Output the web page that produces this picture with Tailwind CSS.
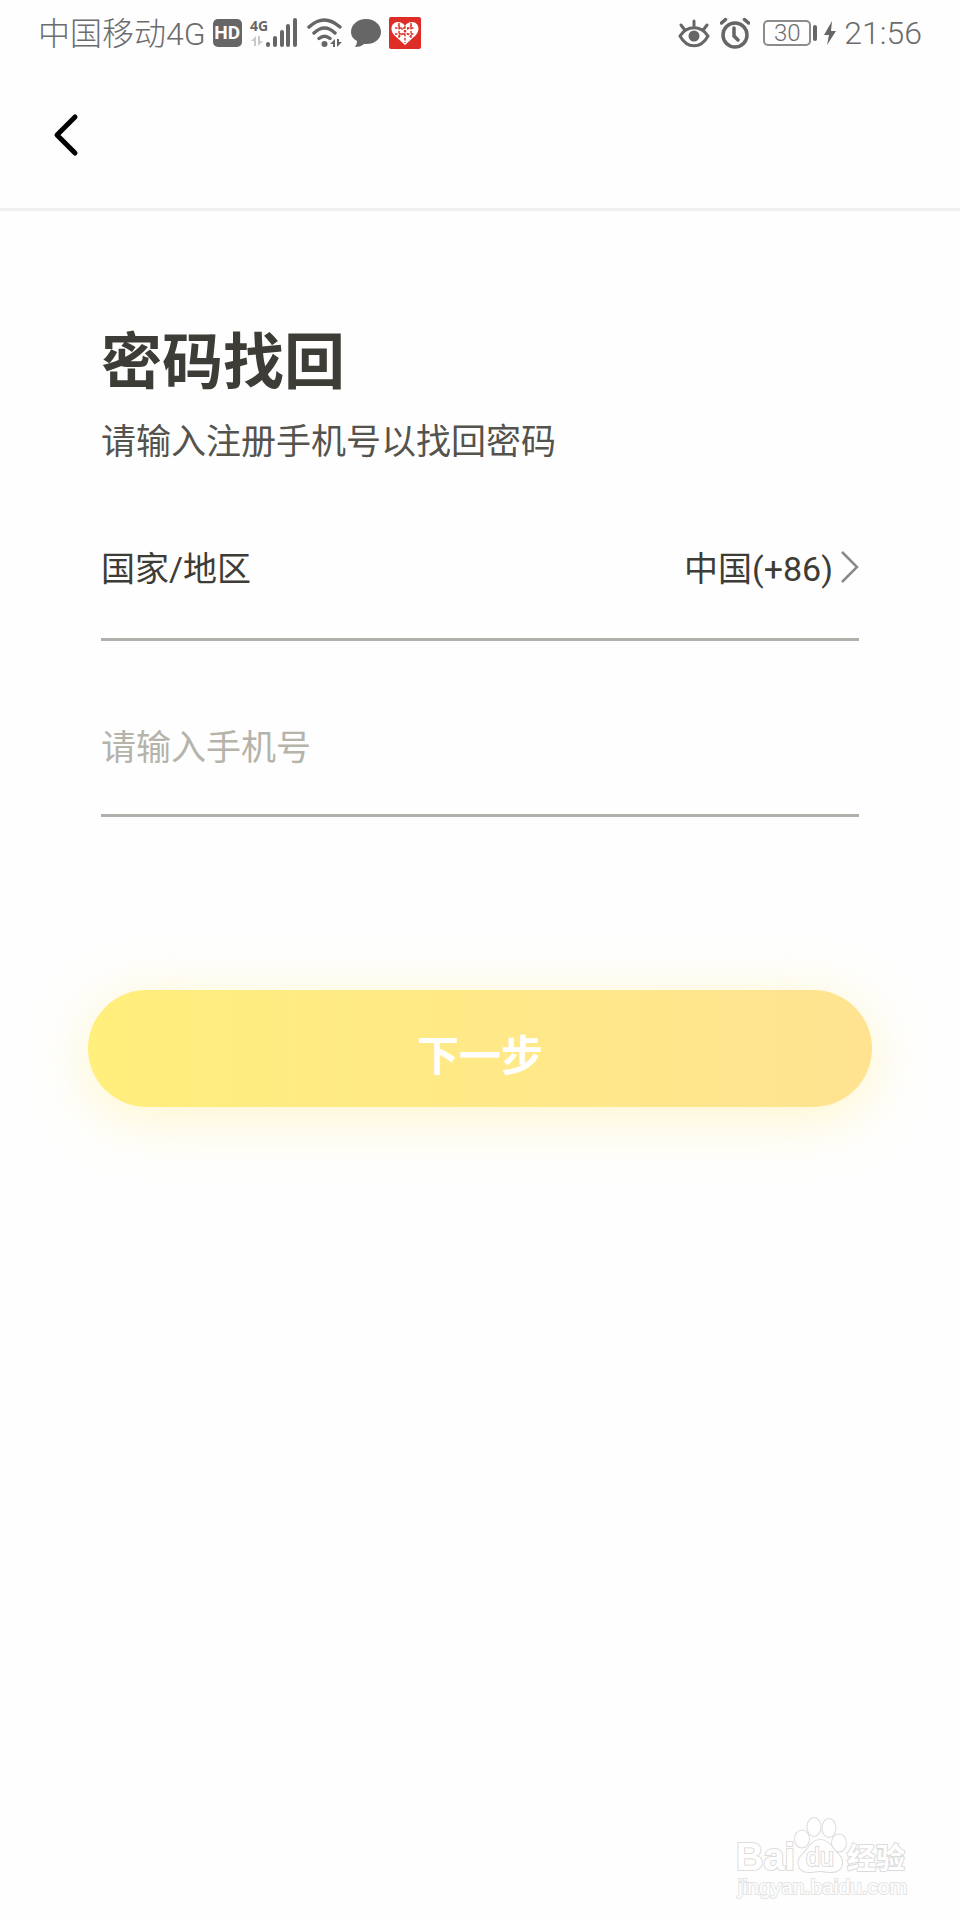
<!DOCTYPE html>
<html lang="zh-CN">

<head>
    <meta charset="UTF-8">
    <meta name="viewport" content="width=device-width, initial-scale=1.0">
    <title>密码找回</title>
    <script src="https://cdn.jsdelivr.net/npm/@tailwindcss/browser@4"></script>
</head>

<body class="bg-[#fefefe] font-['Roboto','Noto_Sans_CJK_SC',sans-serif] text-[#3d3c36]">
    <div class="flex min-h-screen flex-col">

        <!-- Status bar -->
        <div class="flex h-[66px] items-center justify-between px-[38px] text-[#6c6c6c]">
            <div class="flex items-center gap-[7px]">
                <span class="pt-[2px] text-[32px] leading-10 font-light">中国移动4G</span>
                <span class="flex h-7 w-[29px] items-center justify-center rounded-[5px] bg-[#666666] text-[19px] font-bold text-white">HD</span>
                <svg class="h-8 w-[51px]" viewBox="0 0 51 32" fill="#666666">
                    <text x="1" y="14" font-size="14" font-weight="700" font-family="'Open Sans',sans-serif">4G</text>
                    <path d="M2 24l5-5v10H5v-5zM9 19v10l5-5h-3v-5z" fill="#c9c9c9" />
                    <rect x="17" y="25" width="4" height="5" rx="2" />
                    <rect x="24" y="19" width="4" height="11" rx="2" />
                    <rect x="31" y="13" width="4" height="17" rx="2" />
                    <rect x="37" y="7" width="4" height="23" rx="2" />
                    <rect x="44" y="1" width="4" height="29" rx="2" />
                </svg>
                <svg class="h-8 w-9" viewBox="0 0 36 32" fill="none" stroke="#666666" stroke-width="3.4" stroke-linecap="round">
                    <path d="M2 10Q17-4 33 10M7 16Q17.500 6 28 16M12 21.500Q17.500 17 23 21.500" />
                    <circle cx="17.500" cy="27" r="3" fill="#666666" stroke="none" />
                    <path d="M23 27l5-5v8h-2v-3zM30 22v8l5-5h-3v-3z" fill="#666666" stroke="none" />
                </svg>
                <svg class="h-8 w-8" viewBox="0 0 32 32" fill="#666666">
                    <path d="M16 2C7 2 1 8 1 15c0 4 2 7 6 9 0 3-1 4-2 6 4 0 7-1 9-3 10 1 17-5 17-12S25 2 16 2z" />
                </svg>
                <svg class="h-8 w-8" viewBox="0 0 32 32">
                    <rect width="32" height="32" rx="2" fill="#de2d26" />
                    <path d="M16 28L5 18C0 12 3 5 9 5c3 0 5 1 7 4 2-3 4-4 7-4 6 0 9 7 4 13z" fill="#fff" />
                    <path d="M16 9v17M6 11h20M6 17h20M10 6v14M22 6v14M9 8l14 13M23 8L9 21" stroke="#de2d26" stroke-width="1.400" stroke-dasharray="2.500 1.500" />
                </svg>
            </div>

            <div class="flex items-center">
                <svg class="h-8 w-8" viewBox="0 0 32 32" fill="none" stroke="#666666" stroke-width="3" stroke-linecap="round">
                    <path d="M2 19C9 8 23 8 30 19 23 32 9 32 2 19zM16 4v6M3 8l3 4M29 8l-3 4" />
                    <circle cx="16" cy="19" r="5.500" fill="#666666" stroke="none" />
                </svg>
                <svg class="ml-[10px] h-8 w-[30px]" viewBox="0 0 30 32" fill="none" stroke="#666666" stroke-width="3.5" stroke-linecap="round">
                    <circle cx="15" cy="18" r="12" />
                    <path d="M14 11v8l4 4M1.500 6l4-3.500M28.500 6l-4-3.500" />
                </svg>
                <div class="ml-[13px] flex h-[26px] w-12 items-center justify-center rounded-[5px] border-2 border-[#8c8c8c] text-2xl font-light">30</div>
                <div class="ml-[2px] h-4 w-1 rounded-full bg-[#666666]"></div>
                <svg class="ml-[7px] h-6 w-3" viewBox="0 0 12 24" fill="#666666">
                    <path d="M8 0L0 14h5L3 24l9-14H7z" />
                </svg>
                <span class="ml-2 text-[32px] leading-10 font-light">21:56</span>
            </div>
        </div>

        <!-- Navigation -->
        <header class="flex h-[145px] items-center border-b-3 border-[#f0f0f0] pb-1 pl-[51px]">
            <button type="button" aria-label="返回">
                <svg class="h-12 w-8" viewBox="0 0 32 48" fill="none" stroke="#000" stroke-width="5" stroke-linecap="round" stroke-linejoin="round">
                    <path d="M24 6L6 24l18 18" />
                </svg>
            </button>
        </header>

        <main class="px-[101px] pt-28">
            <h1 class="text-[61px] leading-20 font-bold">密码找回</h1>
            <p class="mt-4 text-[35px] leading-12 text-[#54534d]">请输入注册手机号以找回密码</p>

            <form>
                <!-- Country / region -->
                <div class="mt-[78px] flex h-24 items-start justify-between border-b-3 border-[#b1b0aa]">
                    <label for="region" class="text-[34px] leading-12">国家/地区</label>
                    <button id="region" type="button" class="flex items-center gap-2 text-[34px] leading-12">
                        中国(+86)
                        <svg class="mb-1 h-8 w-[18px]" viewBox="0 0 18 32" fill="none" stroke="#8a8a8a" stroke-width="2.500">
                            <path d="M1 1l15 15L1 31" />
                        </svg>
                    </button>
                </div>

                <!-- Phone number -->
                <input type="tel" aria-label="手机号" placeholder="请输入手机号"
                    class="mt-[72px] block h-[104px] w-full border-b-3 border-[#b1b0aa] pb-[30px] text-[35px] outline-none placeholder:text-[#b5b3aa]">

                <div class="-mx-[13px] mt-[173px]">
                    <button type="submit"
                        class="h-[117px] w-full rounded-full bg-linear-to-r from-[#ffef7c] to-[#ffe391] pt-4 text-[42px] font-bold text-white shadow-[0_10px_60px_rgba(255,236,120,0.4)]">下一步</button>
                </div>
            </form>
        </main>

        <!-- Watermark -->
        <footer class="mt-auto flex justify-end pr-[50px] pb-4">
            <svg class="h-[90px] w-[176px]" viewBox="0 0 176 90" fill="#fff" stroke="#dcdcdc" stroke-width="2" paint-order="stroke" font-family="'Liberation Sans','Noto Sans CJK SC',sans-serif">
                <text x="2" y="56" font-size="38" font-weight="700">Bai</text>
                <ellipse cx="68" cy="25" rx="7" ry="8.500" />
                <ellipse cx="80" cy="13" rx="6.500" ry="9" />
                <ellipse cx="95" cy="14" rx="6.500" ry="9" />
                <ellipse cx="105" cy="29" rx="7" ry="8.500" />
                <path d="M86 26c-9 0-11 9-17 14-7 6-6 18 6 18 5 0 7-1 11-1s6 1 11 1c12 0 14-11 7-18-6-6-9-14-18-14z" />
                <text x="72" y="52" font-size="25">du</text>
                <text x="113" y="55" font-size="29" font-weight="700">经验</text>
                <text x="4" y="80" font-size="21" stroke="#e4e4e4">jingyan.baidu.com</text>
            </svg>
        </footer>
    </div>
</body>

</html>
